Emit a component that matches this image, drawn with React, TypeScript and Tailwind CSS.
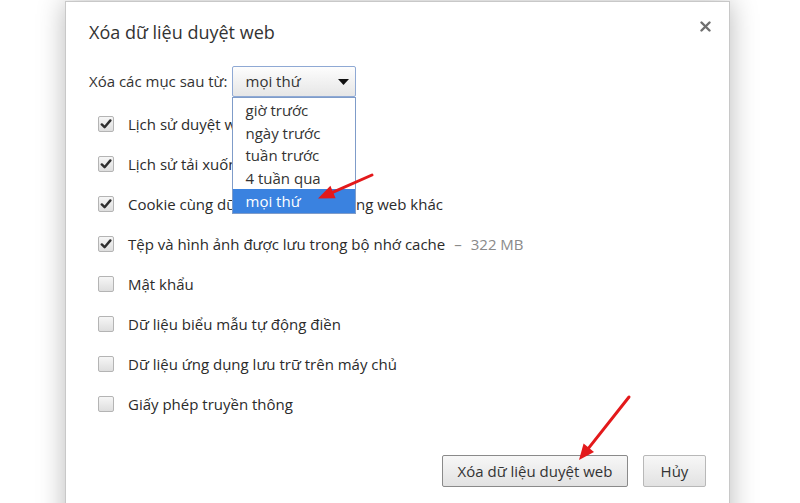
import React from 'react';

const options = ['giờ trước', 'ngày trước', 'tuần trước', '4 tuần qua'];

const items = [
  { label: 'Lịch sử duyệt web', checked: true },
  { label: 'Lịch sử tải xuống', checked: true },
  { label: 'Cookie cùng dữ liệu plugin và trang web khác', checked: true },
  { label: 'Tệp và hình ảnh được lưu trong bộ nhớ cache', checked: true, extra: '322 MB' },
  { label: 'Mật khẩu', checked: false },
  { label: 'Dữ liệu biểu mẫu tự động điền', checked: false },
  { label: 'Dữ liệu ứng dụng lưu trữ trên máy chủ', checked: false },
  { label: 'Giấy phép truyền thông', checked: false },
];

const Checkbox: React.FC<{ checked: boolean }> = ({ checked }) => (
  <span className="flex h-[16px] w-[16px] shrink-0 items-center justify-center rounded-[2px] border border-[#b4b4b4] bg-gradient-to-b from-[#f6f6f6] to-[#dedede]">
    {checked && (
      <svg width="12" height="12" viewBox="0 0 12 12">
        <path d="M1.8 6.4 L4.6 9.2 L10.4 2.4" fill="none" stroke="#2e2e2e" strokeWidth="2.4" strokeLinecap="round" strokeLinejoin="round" />
      </svg>
    )}
  </span>
);

export default function App() {
  return (
    <div
      className="relative h-[503px] w-[800px] overflow-hidden bg-white text-[#333]"
      style={{ fontFamily: '"Open Sans", "Noto Sans", sans-serif' }}
    >
      <div className="ml-[65px] mt-[1px] h-[540px] w-[665px] border border-[#c8c8c8] bg-white pl-[23px] pr-[18px] pt-[18px] shadow-[0_0_26px_rgba(0,0,0,0.28)]">
        {/* header */}
        <div className="flex items-start justify-between">
          <h1 className="text-[18px] leading-[24px] text-[#333]">Xóa dữ liệu duyệt web</h1>
          <svg width="11" height="11" viewBox="0 0 11 11" className="mt-[1px]">
            <path d="M1.5 1.5 L9.5 9.5 M9.5 1.5 L1.5 9.5" stroke="#6f6f6f" strokeWidth="2.4" strokeLinecap="round" />
          </svg>
        </div>

        {/* time range */}
        <div className="mt-[22px] flex items-center gap-[4px]">
          <span className="text-[15px] text-[#333]">Xóa các mục sau từ:</span>
          <div className="relative">
            <div className="flex h-[31px] w-[124px] items-center justify-between rounded-[2px] border border-[#8fa9d4] bg-gradient-to-b from-[#fdfdfd] to-[#e6e6e6] pl-[13px] pr-[6px]">
              <span className="text-[15px] text-[#333]">mọi thứ</span>
              <svg width="11" height="6" viewBox="0 0 11 6">
                <path d="M0 0 H11 L5.5 6 Z" fill="#111" />
              </svg>
            </div>
            <ul className="absolute left-0 top-full z-10 w-[124px] border border-[#7f9cc9] bg-white pt-[1px]">
              {options.map((o) => (
                <li key={o} className="flex h-[22.5px] items-center pl-[13px] text-[15px] text-[#333]">
                  {o}
                </li>
              ))}
              <li className="flex h-[24px] items-center bg-[#3a82e0] pl-[13px] text-[15px] text-white">mọi thứ</li>
            </ul>
          </div>
        </div>

        {/* items */}
        <ul className="mt-[7px] pl-[9px]">
          {items.map((it) => (
            <li key={it.label} className="flex h-[40px] items-center gap-[14px]">
              <Checkbox checked={it.checked} />
              <span className="whitespace-nowrap text-[15px] text-[#2b2b2b]">
                {it.label}
                {it.extra && (
                  <span className="text-[#8a8a8a]">
                    <span className="mx-[9px]">–</span>
                    {it.extra}
                  </span>
                )}
              </span>
            </li>
          ))}
        </ul>

        {/* buttons */}
        <div className="mt-[31px] flex justify-end gap-[15px] pr-[5px]">
          <button className="h-[32px] w-[186px] rounded-[2px] border border-[#8a8a8a] bg-gradient-to-b from-[#f7f7f7] to-[#e2e2e2] text-[15px] text-[#333]">
            Xóa dữ liệu duyệt web
          </button>
          <button className="h-[32px] w-[63px] rounded-[2px] border border-[#b8b8b8] bg-gradient-to-b from-[#f7f7f7] to-[#e2e2e2] text-[15px] text-[#333]">
            Hủy
          </button>
        </div>
      </div>

      {/* annotation arrows */}
      <svg className="pointer-events-none absolute left-0 top-0 z-20" width="800" height="503">
        <line x1="372" y1="175" x2="332" y2="192.6" stroke="#e3191b" strokeWidth="3" strokeLinecap="round" />
        <polygon points="318,198.5 335.6,198.2 330.4,185.8" fill="#e3191b" />
        <line x1="629" y1="397" x2="589" y2="447.6" stroke="#e3191b" strokeWidth="3" strokeLinecap="round" />
        <polygon points="579,460 594,452 583.6,443.6" fill="#e3191b" />
      </svg>
    </div>
  );
}
